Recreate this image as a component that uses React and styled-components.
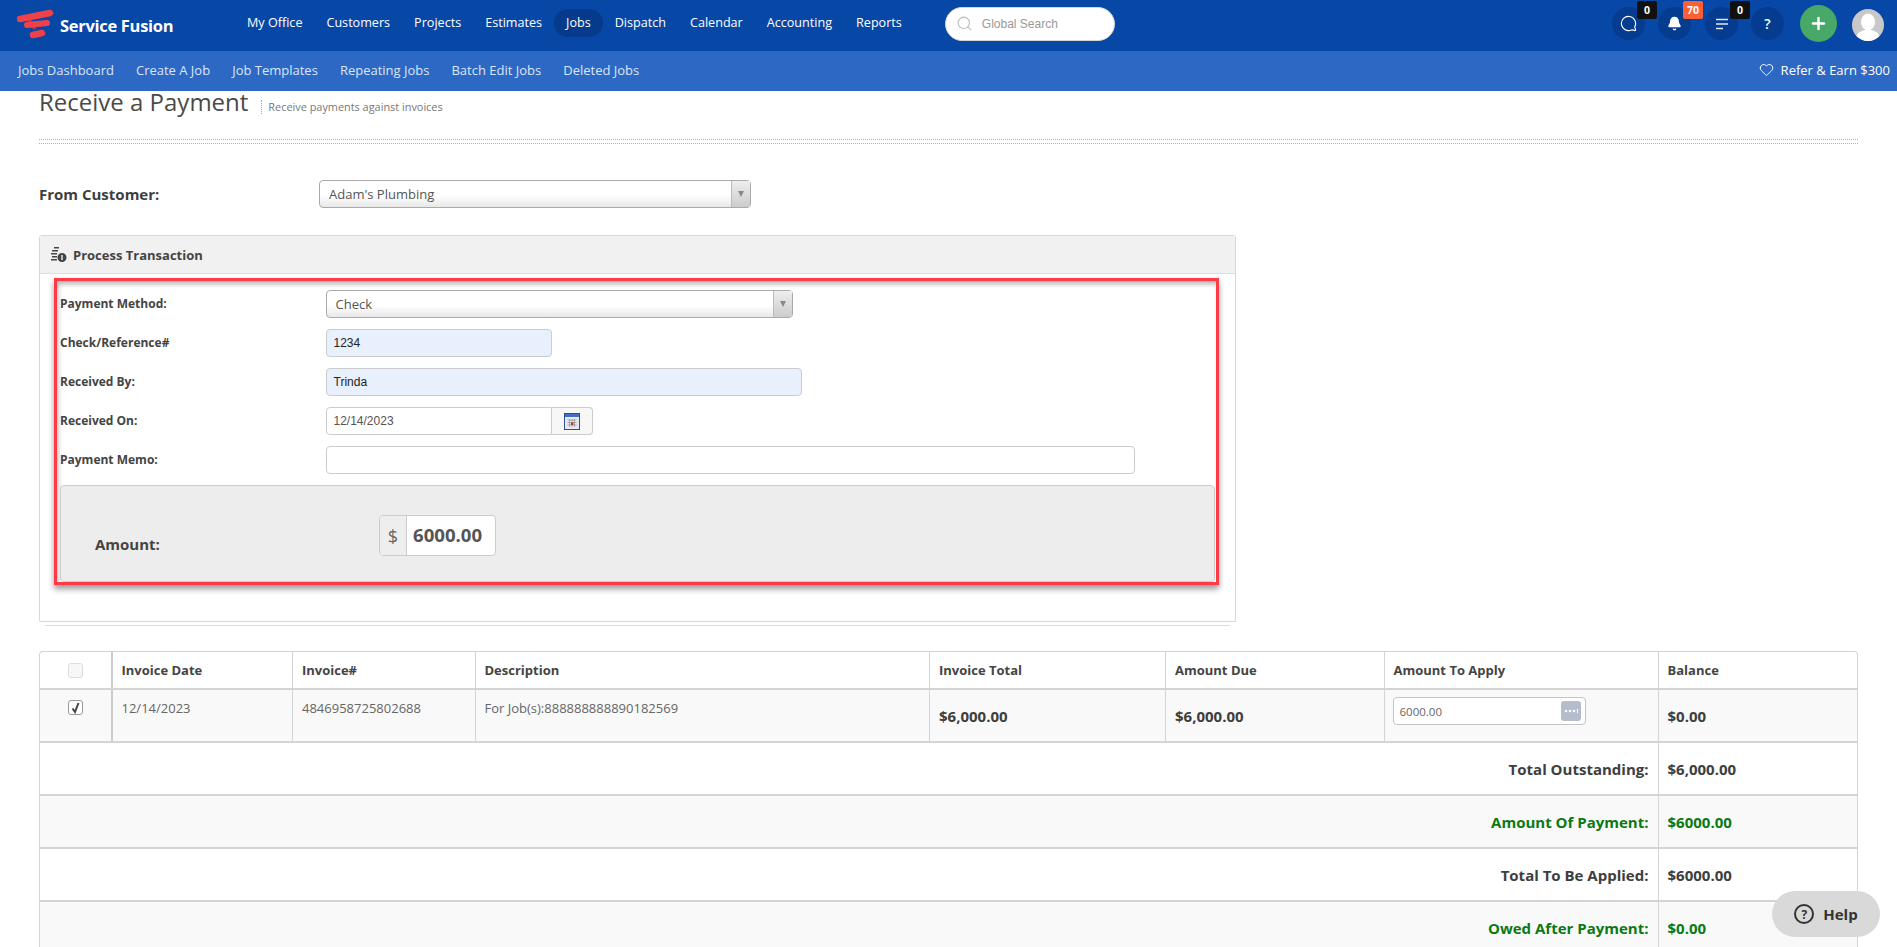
import React from "react";
import styled, { createGlobalStyle } from "styled-components";
import { Search, Heart, MessageCircle, Bell, Plus } from "lucide-react";

const Global = createGlobalStyle`
  html, body { margin: 0; padding: 0; height: 947px; overflow: hidden; background: #fff; }
  body { font-family: "Open Sans", "Liberation Sans", sans-serif; color: #444; }
  * { box-sizing: border-box; }
`;

const TopBar = styled.header`
  height: 51px; background: #0747a6; display: flex; align-items: center; position: relative;
`;
const Brand = styled.div`
  width: 235px; padding-left: 17px; display: flex; align-items: center; gap: 5px; flex: none; margin-bottom: 2px;
`;
const BrandName = styled.span`
  font-size: 16.5px; font-weight: 700; color: #fff; letter-spacing: -0.3px; white-space: nowrap; margin-top: 2px;
`;
const MainNav = styled.nav`
  display: flex; align-items: center; flex: none; margin-top: -6px;
`;
const NavItem = styled.a`
  font-size: 12.6px; color: #fff; white-space: nowrap; padding: 0 12px; height: 28px; line-height: 28px;
  border-radius: 14px; background: ${p => (p.$active ? "#063a8a" : "transparent")};
`;
const SearchBox = styled.div`
  width: 170px; height: 34px; background: #fff; border-radius: 17px; border: 1px solid #d5d5d5;
  margin: 0 0 4px 31px; display: flex; align-items: center; padding-left: 10px; gap: 9px; flex: none;
  font-family: "Liberation Sans", Arial, sans-serif; font-size: 12px; color: #999;
`;
const TopRight = styled.div`
  margin-left: auto; display: flex; align-items: center; padding-right: 13px;
`;
const Circle = styled.div`
  width: 33px; height: 33px; border-radius: 50%; background: #063c8f; margin: 0 ${p => p.$mr || 14}px 4px 0;
  color: #fff; display: flex; align-items: center; justify-content: center; position: relative;
  font-size: 14px; font-weight: 600;
`;
const Badge = styled.span`
  position: absolute; top: -6px; left: 25px; width: 20px; height: 18px; border-radius: 2px;
  background: ${p => p.$bg || "#111"}; color: #fff; font-size: 10.5px; font-weight: 700;
  display: flex; align-items: center; justify-content: center;
`;
const ChatIcon = styled(MessageCircle)`
  transform: scaleX(-1);
`;
const AddButton = styled.div`
  width: 37px; height: 37px; border-radius: 50%; background: #47a868; color: #fff;
  display: flex; align-items: center; justify-content: center; margin: 0 15px 4px 2px;
`;
const Avatar = styled.div`
  width: 32px; height: 32px; border-radius: 50%; background: #c8c8c8; overflow: hidden; flex: none; margin-bottom: 1px;
`;

const SubBar = styled.nav`
  height: 40px; background: #2d69c4; display: flex; align-items: center; padding: 0 7px 3px 18px; gap: 22px;
`;
const SubItem = styled.a`
  font-size: 13px; color: #dbe5f5; white-space: nowrap;
`;
const Refer = styled.div`
  margin-left: auto; display: flex; align-items: center; gap: 7px; color: #fff; font-size: 13px; white-space: nowrap;
`;

const Page = styled.main`
  padding: 0 39px;
`;
const TitleRow = styled.div`
  height: 48px; display: flex; align-items: flex-start;
`;
const Divider = styled.div`
  height: 5px; border-top: 1px dotted #b0b0b0; border-bottom: 1px dotted #b0b0b0;
`;
const Title = styled.h1`
  margin: -1px 0 0; font-size: 24px; font-weight: 400; color: #4a4a4a; line-height: 24px; white-space: nowrap;
`;
const Subtitle = styled.span`
  font-size: 10.9px; color: #777; border-left: 1px dotted #aaa; margin-left: 13px; padding-left: 6px;
  margin-top: 9px; height: 14px; line-height: 14px; white-space: nowrap;
`;
const CustomerRow = styled.div`
  display: flex; align-items: center; margin-top: 36px; height: 28px;
`;
const CustomerLabel = styled.label`
  width: 280px; font-size: 15px; font-weight: 700; color: #3e3e3e;
`;
const Select = styled.div`
  width: ${p => p.$w}px; height: 28px; border: 1px solid #aaa; border-radius: 4px; display: flex; align-items: center;
  padding-left: 9px; font-size: 13px; color: #555; position: relative;
  background: linear-gradient(#fff 55%, #e8e8e8);
`;
const SelectArrow = styled.span`
  position: absolute; top: 0; right: 0; bottom: 0; width: 19px; border-left: 1px solid #bbb;
  background: linear-gradient(#eee, #ccc); display: flex; align-items: center; justify-content: center;
  &::after { content: ""; border: 3.5px solid transparent; border-top: 6px solid #888; border-bottom: 0; }
`;

const Panel = styled.section`
  width: 1197px; height: 387px; margin-top: 27px; border: 1px solid #d8d8d8; border-radius: 3px 3px 0 0;
  box-shadow: 0 9px 0 -6px #fff, 0 10px 0 -6px #ddd;
`;
const PanelHead = styled.div`
  height: 38px; background: #f1f1f1; border-bottom: 1px solid #ddd; display: flex; align-items: center;
  padding-left: 11px; gap: 6px; font-size: 13px; font-weight: 700; color: #444;
`;
const Highlight = styled.div`
  width: 1165px; height: 307px; margin: 4px 0 0 14px; border: 3px solid #ff3b45; padding: 9px 1px 0 3px;
  box-shadow: 0 4px 6px rgba(0,0,0,.4), inset 2px 4px 5px -1px rgba(0,0,0,.3);
  display: flex; flex-direction: column; gap: 11px;
`;
const FormRow = styled.div`
  display: flex; align-items: center; height: 28px;
`;
const FormLabel = styled.label`
  width: 265.5px; flex: none; font-size: 12px; font-weight: 700; color: #444; margin-top: -1px;
`;
const Field = styled.div`
  width: ${p => p.$w}px; height: 28px; border: 1px solid #ccc; border-radius: ${p => p.$r || "4px"}; display: flex; align-items: center;
  padding-left: 7px; font-size: 12px; color: ${p => (p.$filled ? "#222" : "#555")}; font-family: "Liberation Sans", Arial, sans-serif;
  background: ${p => (p.$filled ? "#e8f0fe" : "#fff")};
`;
const CalendarAddon = styled.div`
  width: 41px; height: 28px; border: 1px solid #ccc; border-left: 0; border-radius: 0 4px 4px 0; background: #f7f7f7;
  display: flex; align-items: center; justify-content: center;
`;
const AmountBox = styled.div`
  height: 97px; background: #ededed; border: 1px solid #ccc; border-radius: 4px; display: flex; padding-left: 34px;
`;
const AmountLabel = styled.label`
  width: 284px; flex: none; font-size: 15px; font-weight: 700; color: #444; margin-top: 48px;
`;
const AmountGroup = styled.div`
  display: flex; width: 117px; height: 41px; margin-top: 29px; border: 1px solid #ccc; border-radius: 4px; overflow: hidden; background: #fff;
`;
const AmountAddon = styled.span`
  width: 27px; flex: none; background: #eee; border-right: 1px solid #ccc; display: flex; align-items: center; justify-content: center;
  font-size: 18px; color: #666;
`;
const AmountValue = styled.span`
  font-size: 18.6px; font-weight: 700; color: #555; padding-left: 6px; line-height: 37px;
`;

const TableWrap = styled.div`
  width: 1819px; margin-top: 29px; border: 1px solid #d4d4d4; border-radius: 4px 4px 0 0; border-bottom: 0;
`;
const Table = styled.table`
  width: 100%; table-layout: fixed; border-collapse: collapse;
`;
const Th = styled.th`
  height: 37px; padding: 0 9px; text-align: left; font-size: 13px; font-weight: 700; color: #444;
  border-left: 1px solid #d4d4d4; border-bottom: 2px solid #d4d4d4; white-space: nowrap;
  &:first-child { border-left: 0; padding: 0; }
  ${p => p.$strong && "border-left: 2px solid #ccc;"}
`;
const Td = styled.td`
  height: 53px; padding: 9px 9px 0; vertical-align: top; font-size: 13px; color: #666; background: #f9f9f9;
  border-left: 1px solid #d4d4d4; border-bottom: 2px solid #d4d4d4; white-space: nowrap;
  &:first-child { border-left: 0; padding: 10px 0 0; }
  ${p => p.$strong && "border-left: 2px solid #ccc;"}
`;
const MoneyTd = styled(Td)`
  font-size: 15px; font-weight: 700; color: #3e3e3e; padding-top: 0; vertical-align: middle;
`;
const SumLabel = styled.td`
  height: 53px; padding-right: 9px; text-align: right; font-size: 15px; font-weight: 700; white-space: nowrap;
  color: ${p => (p.$green ? "#0a7a12" : "#3e3e3e")}; background: ${p => (p.$alt ? "#f9f9f9" : "#fff")};
  border-bottom: 2px solid #d4d4d4;
`;
const SumValue = styled(SumLabel)`
  text-align: left; padding: 0 9px; border-left: 1px solid #d4d4d4;
`;
const CheckBox = styled.span`
  display: flex; align-items: center; justify-content: center; width: 15px; height: 15px; margin: 0 auto;
  border: 1px solid ${p => (p.$checked ? "#999" : "#ddd")}; border-radius: 3px; background: ${p => (p.$checked ? "#fff" : "#f7f7f7")};
`;
const ApplyInput = styled.div`
  width: 193px; height: 28px; margin: -2px 0 0 -1px; border: 1px solid #c4c4c4; border-radius: 4px; background: #fff;
  display: flex; align-items: center; justify-content: space-between; padding: 0 4px 0 6px; font-size: 11.5px; color: #666;
`;
const DotsButton = styled.span`
  width: 20px; height: 20px; border-radius: 3px; background: #b5bccc;
  display: flex; align-items: center; justify-content: center;
`;
const HelpButton = styled.button`
  position: fixed; left: 1772px; top: 891px; width: 108px; height: 46px; border: 0; border-radius: 23px; background: #d9d9d9;
  display: flex; align-items: center; justify-content: center; gap: 9px; font-family: "Open Sans", sans-serif;
  font-size: 15px; font-weight: 700; color: #333;
`;
const HelpIcon = styled.span`
  width: 20px; height: 20px; border: 2px solid #333; border-radius: 50%; display: flex; align-items: center; justify-content: center;
  font-size: 12px; font-weight: 700;
`;

const Logo = () => (
  <svg width="38" height="31" viewBox="0 0 38 31">
    <path d="M11 12 L19 19" stroke="#c4303c" strokeWidth="5" />
    <path d="M3 10 L33 4" stroke="#f0414a" strokeWidth="6.5" strokeLinecap="round" />
    <path d="M10 16 L30 14" stroke="#f0414a" strokeWidth="6" strokeLinecap="round" />
    <path d="M16 26 L25 24" stroke="#f0414a" strokeWidth="6.5" strokeLinecap="round" />
  </svg>
);
const ListIcon = () => (
  <svg width="14" height="12" viewBox="0 0 14 12" stroke="#dfe8f7" strokeWidth="1.6">
    <path d="M1 1.500H13M1 6H13M1 10.500H8" />
  </svg>
);
const AvatarIcon = () => (
  <svg width="32" height="32" viewBox="0 0 32 32" fill="#fff">
    <ellipse cx="16" cy="13" rx="7" ry="8.500" />
    <ellipse cx="16" cy="30" rx="12" ry="9.500" />
  </svg>
);
const Coins = () => (
  <svg width="16" height="16" viewBox="0 0 16 16" fill="#444">
    <path d="M1 3h6v1.500H1zM0 6h6v1.500H0zM1 9h5v1.500H1zM0 12h6v1.500H0zM3 0h5v1.500H3z" />
    <circle cx="11" cy="10.500" r="4.500" />
    <rect x="10.300" y="8" width="1.400" height="5" fill="#f1f1f1" />
  </svg>
);
const CalendarIcon = () => (
  <svg width="16" height="17" viewBox="0 0 16 17">
    <rect x=".5" y=".5" width="15" height="16" fill="#e6e9f2" stroke="#2d4d9a" />
    <rect x="1" y="1" width="14" height="3" fill="#3f6fc0" />
    <path d="M3.500 7h9M3.500 9.500h9M3.500 12h9M5.500 6v8M8 6v8M10.500 6v8" stroke="#9a9a9a" strokeWidth=".8" />
    <rect x="7" y="9.500" width="2.500" height="2.500" fill="#c0392b" />
  </svg>
);
const Tick = () => (
  <svg width="11" height="13" viewBox="0 0 11 13" fill="none" stroke="#444" strokeWidth="2">
    <path d="M2.500 7.500 L5 11 L8.500 2" />
  </svg>
);
const Dots = () => (
  <svg width="14" height="4" viewBox="0 0 14 4" fill="#fff">
    <circle cx="2" cy="2" r="1.300" />
    <circle cx="6" cy="2" r="1.300" />
    <circle cx="10" cy="2" r="1.300" />
    <rect x="13" y="0" width="1" height="4" />
  </svg>
);

const mainNav = ["My Office", "Customers", "Projects", "Estimates", "Jobs", "Dispatch", "Calendar", "Accounting", "Reports"];
const subNav = ["Jobs Dashboard", "Create A Job", "Job Templates", "Repeating Jobs", "Batch Edit Jobs", "Deleted Jobs"];
const colWidths = [71.5, 181, 182.5, 454.5, 236, 218.5, 274, 199];
const headers = ["Invoice Date", "Invoice#", "Description", "Invoice Total", "Amount Due", "Amount To Apply", "Balance"];
const summary = [
  { label: "Total Outstanding:", value: "$6,000.00" },
  { label: "Amount Of Payment:", value: "$6000.00", green: true, alt: true },
  { label: "Total To Be Applied:", value: "$6000.00" },
  { label: "Owed After Payment:", value: "$0.00", green: true, alt: true },
];

export default function App() {
  return (
    <>
      <Global />
      <TopBar>
        <Brand>
          <Logo />
          <BrandName>Service Fusion</BrandName>
        </Brand>
        <MainNav>
          {mainNav.map(n => (
            <NavItem key={n} $active={n === "Jobs"}>{n}</NavItem>
          ))}
        </MainNav>
        <SearchBox>
          <Search size={17} color="#bbb" strokeWidth={1.5} />
          Global Search
        </SearchBox>
        <TopRight>
          <Circle $mr={13}><ChatIcon size={17} strokeWidth={1.6} /><Badge>0</Badge></Circle>
          <Circle><Bell size={15} fill="#fff" /><Badge $bg="#ff5f36">70</Badge></Circle>
          <Circle $mr={13}><ListIcon /><Badge>0</Badge></Circle>
          <Circle>?</Circle>
          <AddButton><Plus size={19} strokeWidth={3} /></AddButton>
          <Avatar><AvatarIcon /></Avatar>
        </TopRight>
      </TopBar>
      <SubBar>
        {subNav.map(n => (
          <SubItem key={n}>{n}</SubItem>
        ))}
        <Refer><Heart size={15} strokeWidth={1.5} />Refer & Earn $300</Refer>
      </SubBar>
      <Page>
        <TitleRow>
          <Title>Receive a Payment</Title>
          <Subtitle>Receive payments against invoices</Subtitle>
        </TitleRow>
        <Divider />
        <CustomerRow>
          <CustomerLabel>From Customer:</CustomerLabel>
          <Select $w={432}>Adam's Plumbing<SelectArrow /></Select>
        </CustomerRow>
        <Panel>
          <PanelHead><Coins />Process Transaction</PanelHead>
          <Highlight>
            <FormRow>
              <FormLabel>Payment Method:</FormLabel>
              <Select $w={467}>Check<SelectArrow /></Select>
            </FormRow>
            <FormRow>
              <FormLabel>Check/Reference#</FormLabel>
              <Field $w={226} $filled>1234</Field>
            </FormRow>
            <FormRow>
              <FormLabel>Received By:</FormLabel>
              <Field $w={476} $filled>Trinda</Field>
            </FormRow>
            <FormRow>
              <FormLabel>Received On:</FormLabel>
              <Field $w={226} $r="4px 0 0 4px">12/14/2023</Field>
              <CalendarAddon><CalendarIcon /></CalendarAddon>
            </FormRow>
            <FormRow>
              <FormLabel>Payment Memo:</FormLabel>
              <Field $w={809} />
            </FormRow>
            <AmountBox>
              <AmountLabel>Amount:</AmountLabel>
              <AmountGroup>
                <AmountAddon>$</AmountAddon>
                <AmountValue>6000.00</AmountValue>
              </AmountGroup>
            </AmountBox>
          </Highlight>
        </Panel>
        <TableWrap>
          <Table>
            <colgroup>
              {colWidths.map((w, i) => <col key={i} style={{ width: w }} />)}
            </colgroup>
            <thead>
              <tr>
                <Th><CheckBox /></Th>
                {headers.map((h, i) => <Th key={h} $strong={i === 0}>{h}</Th>)}
              </tr>
            </thead>
            <tbody>
              <tr>
                <Td><CheckBox $checked><Tick /></CheckBox></Td>
                <Td $strong>12/14/2023</Td>
                <Td>4846958725802688</Td>
                <Td>For Job(s):888888888890182569</Td>
                <MoneyTd>$6,000.00</MoneyTd>
                <MoneyTd>$6,000.00</MoneyTd>
                <Td><ApplyInput>6000.00<DotsButton><Dots /></DotsButton></ApplyInput></Td>
                <MoneyTd>$0.00</MoneyTd>
              </tr>
              {summary.map(s => (
                <tr key={s.label}>
                  <SumLabel colSpan={7} $green={s.green} $alt={s.alt}>{s.label}</SumLabel>
                  <SumValue $green={s.green} $alt={s.alt}>{s.value}</SumValue>
                </tr>
              ))}
            </tbody>
          </Table>
        </TableWrap>
      </Page>
      <HelpButton><HelpIcon>?</HelpIcon>Help</HelpButton>
    </>
  );
}
